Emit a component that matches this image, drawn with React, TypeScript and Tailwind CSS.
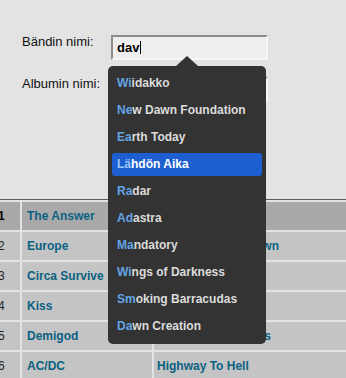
import React from "react";

type Band = { no: number; name: string; album: string };

const bands: Band[] = [
  { no: 1, name: "The Answer", album: "Everyday Demons" },
  { no: 2, name: "Europe", album: "The Final Countdown" },
  { no: 3, name: "Circa Survive", album: "Juturna" },
  { no: 4, name: "Kiss", album: "Destroyer" },
  { no: 5, name: "Demigod", album: "Let Us Be the Cross" },
  { no: 6, name: "AC/DC", album: "Highway To Hell" },
];

const suggestions = [
  "Wiidakko",
  "New Dawn Foundation",
  "Earth Today",
  "Lähdön Aika",
  "Radar",
  "Adastra",
  "Mandatory",
  "Wings of Darkness",
  "Smoking Barracudas",
  "Dawn Creation",
];

const ACTIVE = 3;

function Field({ label, children }: { label: string; children?: React.ReactNode }) {
  return (
    <div className="flex items-start">
      <label className="w-[89px] text-[13px] leading-[15px] text-[#111]">{label}</label>
      <div className="mt-[1px] flex h-[25px] w-[157px] items-center border-2 border-[#8c8c8c] border-b-[#f6f6f6] border-r-[#f6f6f6] bg-[#eeeeee] pl-[4px]">
        {children}
      </div>
    </div>
  );
}

export default function App() {
  return (
    <div className="relative h-[378px] w-[346px] overflow-hidden bg-[#e3e3e3] font-['Liberation_Sans',Arial,sans-serif]">
      {/* Form */}
      <div className="flex h-[199px] flex-col gap-[16px] pl-[22px] pt-[34px]">
        <Field label="Bändin nimi:">
          <span className="text-[13px] font-bold leading-[15px] text-black">dav</span>
          <span className="ml-[1px] h-[13px] w-px bg-black" />
        </Field>
        <Field label="Albumin nimi:" />
      </div>

      {/* Table */}
      <div className="border-t border-[#5c5c5c] pt-[2px]">
        {bands.map((b, i) => (
          <div
            key={b.no}
            className={`flex h-[28px] gap-[2px] text-[12px] leading-[28px] ${
              i > 0 ? "mt-[2px]" : ""
            }`}
          >
            <div className={`w-[20px] ${i === 0 ? "bg-[#a9a9a9]" : "bg-[#c4c4c4]"}`}>
              <span className={`-ml-[2px] ${i === 0 ? "font-bold text-black" : "text-[#222]"}`}>{b.no}</span>
            </div>
            <div className={`w-[130px] pl-[5px] font-bold text-[#0b6182] ${i === 0 ? "bg-[#a9a9a9]" : "bg-[#c4c4c4]"}`}>
              {b.name}
            </div>
            <div className={`flex-1 pl-[3px] font-bold text-[#0b6182] ${i === 0 ? "bg-[#a9a9a9]" : "bg-[#c4c4c4]"}`}>
              {b.album}
            </div>
          </div>
        ))}
      </div>

      {/* Autocomplete dropdown */}
      <div className="absolute left-[108px] top-[66px] h-[278px] w-[158px] rounded-[5px] bg-[#333333] px-[4px] pt-[6px]">
        <div className="absolute -top-[10px] left-[68px] h-0 w-0 border-x-[11px] border-b-[10px] border-x-transparent border-b-[#333333]" />
        <ul className="flex flex-col gap-[4px]">
          {suggestions.map((s, i) => (
            <li
              key={s}
              className={`h-[23px] rounded-[3px] pl-[5px] text-[12px] font-bold leading-[23px] ${
                i === ACTIVE ? "bg-[#1d5fd0] text-white" : "text-[#dcdcdc]"
              }`}
            >
              <span className={i === ACTIVE ? "text-[#9cc6f7]" : "text-[#64a4e4]"}>{s.slice(0, 2)}</span>
              {s.slice(2)}
            </li>
          ))}
        </ul>
      </div>
    </div>
  );
}
